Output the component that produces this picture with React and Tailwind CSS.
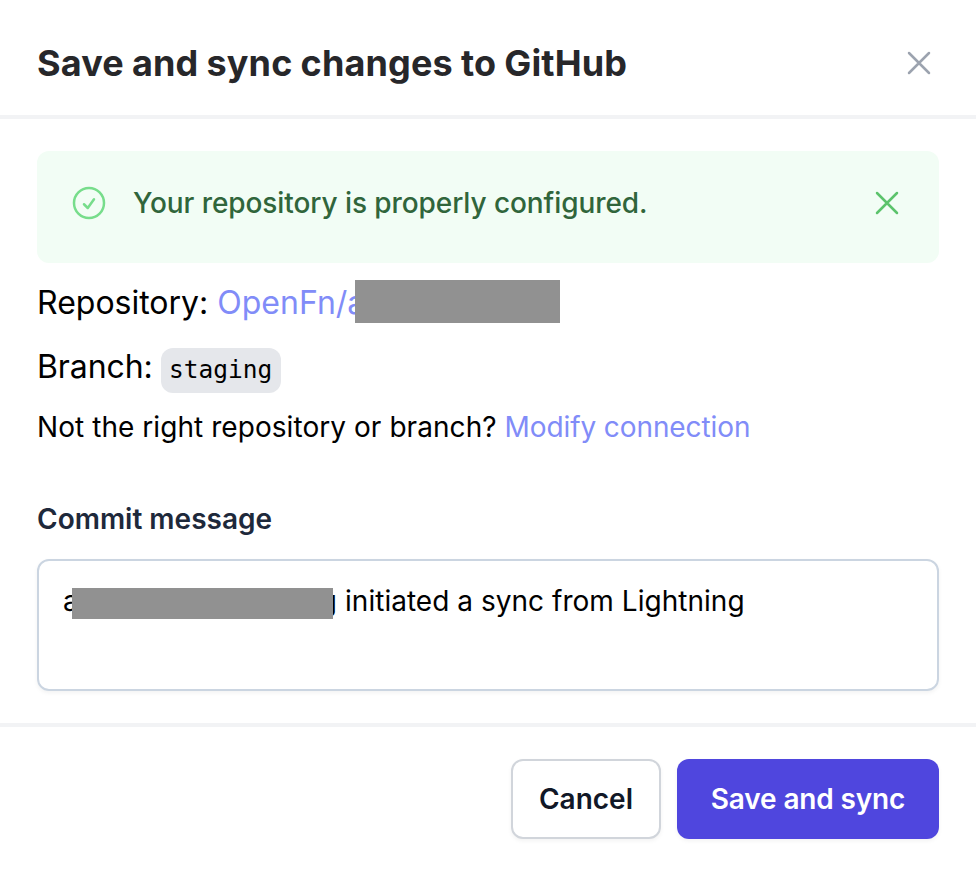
function XMark({ className }) {
  return (
    <svg className={className} viewBox="0 0 24 24" fill="none" stroke="currentColor" strokeWidth="1.5" strokeLinecap="round" strokeLinejoin="round">
      <path d="M6 18 18 6M6 6l12 12" />
    </svg>
  );
}

function CheckCircle({ className }) {
  return (
    <svg className={className} viewBox="0 0 24 24" fill="none" stroke="currentColor" strokeWidth="1.5" strokeLinecap="round" strokeLinejoin="round">
      <path d="M9 12.75 11.25 15 15 9.75M21 12a9 9 0 1 1-18 0 9 9 0 0 1 18 0Z" />
    </svg>
  );
}

export default function App() {
  return (
    <div className="flex h-[880px] w-[976px] flex-col overflow-hidden bg-white font-['Inter',sans-serif] text-black">
      <header className="flex h-[119px] shrink-0 items-center justify-between border-b-4 border-[#f2f3f5] pt-[11px] pr-[37px] pl-[37px]">
        <h1 className="text-[36px] leading-[36px] font-bold tracking-[0.15px] [word-spacing:-0.6px] whitespace-nowrap text-[#27272a]">Save and sync changes to GitHub</h1>
        <button aria-label="Close" className="text-[#9ca3af]">
          <XMark className="size-10" />
        </button>
      </header>

      <main className="flex h-[608px] shrink-0 flex-col border-b-4 border-[#f2f3f5] px-[37px] pt-8">
        <div className="flex h-28 shrink-0 items-start rounded-xl bg-[#f2fdf5] pt-8 pr-8 pl-8">
          <CheckCircle className="size-10 shrink-0 text-[#77dd8b]" />
          <p className="ml-6 grow text-[28px] leading-10 font-medium tracking-[-0.08px] whitespace-nowrap text-[#30653b]">Your repository is properly configured.</p>
          <button aria-label="Dismiss" className="text-[#5cc36c]">
            <XMark className="size-10" />
          </button>
        </div>

        <div className="relative mt-4 flex h-12 shrink-0 items-center text-[32px] leading-[48px] whitespace-nowrap">
          <span>Repository:</span>
          <span className="ml-[9px] text-[#818cf8]">OpenFn/a</span>
          <span className="absolute top-[1px] left-[318px] h-[43px] w-[205px] bg-[#919191]" />
        </div>

        <div className="mt-[19px] flex h-12 shrink-0 items-start text-[32px] leading-[42px] whitespace-nowrap">
          <span className="tracking-[-0.08px]">Branch:</span>
          <code className="mt-[2px] ml-2 flex h-[45px] w-[120px] items-center justify-center rounded-xl bg-[#e5e7eb] pb-[2px] font-['DejaVu_Sans_Mono',monospace] text-[24.5px] leading-[36px]">staging</code>
        </div>

        <p className="mt-[13px] text-[28px] leading-10 whitespace-nowrap">
          <span className="tracking-[0.06px]">Not the right repository or branch? </span>
          <a className="tracking-[-0.1px] text-[#818cf8]">Modify connection</a>
        </p>

        <label className="mt-[52px] text-[28px] leading-10 font-semibold text-[#1e293b]">Commit message</label>
        <div className="mt-5 flex h-[132px] shrink-0 items-start rounded-xl border-2 border-[#cbd5e1] pt-5 pl-6 text-[28px] leading-10 whitespace-nowrap shadow-[0_2px_4px_rgba(0,0,0,0.05)]">
          <div className="relative flex w-[274px] justify-between">
            <span>a</span>
            <span>g</span>
            <span className="absolute top-[7px] left-[9px] h-[31px] w-[261px] bg-[#919191]" />
          </div>
          <span className="ml-2 tracking-[0.03px]">initiated a sync from Lightning</span>
        </div>
      </main>

      <footer className="flex items-start justify-end gap-4 pt-8 pr-[37px]">
        <button className="h-20 w-[150px] rounded-xl border-2 border-[#d1d5db] bg-white text-[28px] leading-10 font-semibold text-[#111827] shadow-[0_2px_4px_rgba(0,0,0,0.05)]">Cancel</button>
        <button className="h-20 w-[262px] rounded-xl bg-[#4f46de] text-[28px] leading-10 font-semibold tracking-[-0.15px] whitespace-nowrap text-white shadow-[0_2px_4px_rgba(0,0,0,0.05)]">Save and sync</button>
      </footer>
    </div>
  );
}
